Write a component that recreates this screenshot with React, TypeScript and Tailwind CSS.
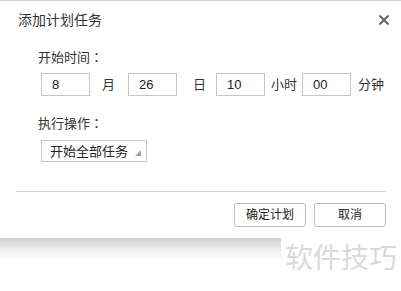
import React from "react";

const font = { fontFamily: '"Liberation Sans", "Noto Sans CJK SC", sans-serif' };
const tc = { fontFamily: '"Noto Sans CJK TC", "Noto Sans CJK SC", sans-serif' };

function Field({ value }: { value: string }) {
  return (
    <div className="w-[49px] h-[23px] border border-[#c6c6c6] bg-white flex items-center pl-[10px] text-[13px] leading-none text-[#222]">
      {value}
    </div>
  );
}

export default function App() {
  return (
    <div className="relative w-[401px] h-[291px] bg-white overflow-hidden" style={font}>
      <div className="h-[238px] border-t border-[#d6d6d6] bg-white flex flex-col text-[#333]">
        <div className="flex items-center justify-between pl-[18px] pr-[11px] h-[37px]">
          <span className="text-[14px] leading-none text-[#333]">添加计划任务</span>
          <svg width="12" height="12" viewBox="0 0 12 12">
            <path d="M1.5 1.5 L10.5 10.5 M10.5 1.5 L1.5 10.5" stroke="#666" strokeWidth="2.2" />
          </svg>
        </div>
        <div className="pl-[38px] mt-[11px] text-[13px] leading-[16px]">
          开始时间<span style={tc}>：</span>
        </div>
        <div className="flex items-center pl-[41px] mt-[7px] text-[13px] leading-none">
          <Field value="8" />
          <span className="ml-[12px]">月</span>
          <span className="ml-[13px]"><Field value="26" /></span>
          <span className="ml-[16px]">日</span>
          <span className="ml-[10px]"><Field value="10" /></span>
          <span className="ml-[6px]">小时</span>
          <span className="ml-[5px]"><Field value="00" /></span>
          <span className="ml-[7px]">分钟</span>
        </div>
        <div className="pl-[38px] mt-[19px] text-[13px] leading-[16px]">
          执行操作<span style={tc}>：</span>
        </div>
        <div className="pl-[41px] mt-[8px]">
          <div className="relative w-[106px] h-[22px] border border-[#c6c6c6] flex items-center pl-[8px] text-[13px] leading-none text-[#222]">
            开始全部任务
            <svg className="absolute right-[5px] bottom-[5px]" width="6" height="6" viewBox="0 0 6 6">
              <polygon points="6,0 6,6 0,6" fill="#a0a0a0" />
            </svg>
          </div>
        </div>
        <div className="mx-[16px] mt-[29px] h-px bg-[#cfcfcf] w-[370px]" />
        <div className="flex justify-end gap-[8px] pr-[15px] mt-[11px]">
          <button className="w-[72px] h-[24px] border border-[#bdbdbd] rounded-[3px] bg-white text-[12px] leading-none text-[#222]">确定计划</button>
          <button className="w-[72px] h-[24px] border border-[#bdbdbd] rounded-[3px] bg-white text-[12px] leading-none text-[#222]">取消</button>
        </div>
      </div>
      <div className="h-[22px] bg-linear-to-b from-[#cdcdcd] via-[#ececec] to-white" />
      <div className="absolute left-[281px] top-[238px] w-[120px] h-[53px] bg-white flex items-start pl-[4px] pt-[4px]">
        <span className="text-[28px] leading-[34px] text-[#dadada] whitespace-nowrap">软件技巧</span>
      </div>
    </div>
  );
}
